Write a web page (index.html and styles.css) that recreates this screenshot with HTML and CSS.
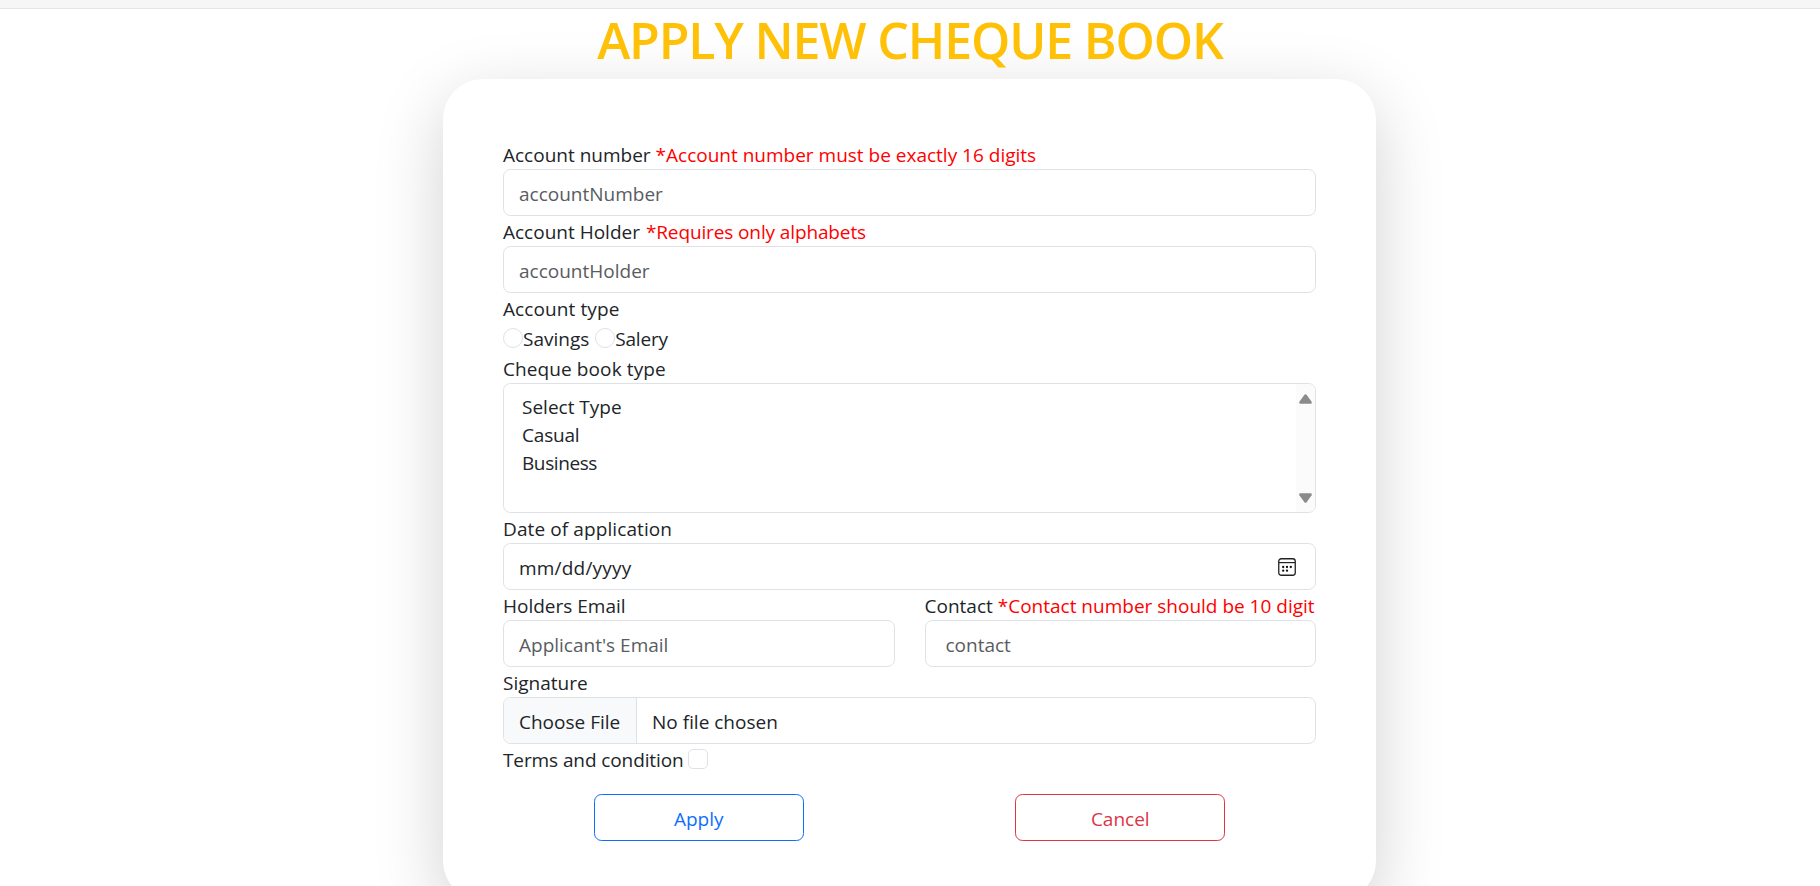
FILE: index.html
```html
<!DOCTYPE html>
<html lang="en">
<head>
<meta charset="utf-8">
<title>Apply New Cheque Book</title>
<link rel="stylesheet" href="styles.css">
</head>
<body>
<div class="topbar"></div>
<h1 class="title">APPLY NEW CHEQUE BOOK</h1>
<form class="card">
  <label class="label">Account number <span class="error">*Account number must be exactly 16 digits</span></label>
  <input class="control" type="text" placeholder="accountNumber">
  <label class="label">Account Holder <span class="error holder-error">*Requires only alphabets</span></label>
  <input class="control" type="text" placeholder="accountHolder">
  <div class="label loose">Account type</div>
  <div class="choices">
    <label class="choice"><span class="radio"></span><span class="choice-text">Savings</span></label>
    <label class="choice"><span class="radio"></span><span class="choice-text tight">Salery</span></label>
  </div>
  <div class="label loose">Cheque book type</div>
  <div class="listbox">
    <div class="options">
      <div>Select Type</div>
      <div class="tight">Casual</div>
      <div class="tighter">Business</div>
    </div>
    <div class="scrollbar">
      <svg width="13" height="10" viewBox="0 0 13 10"><path d="M5.4.8Q6.5-.5 7.600.8L12.600 7.700Q13.200 9.800 11.600 9.800H1.400Q-.2 9.800.4 7.700Z" fill="#8b8b8b"/></svg>
      <svg width="13" height="10" viewBox="0 0 13 10"><path d="M5.400 9.200Q6.500 10.500 7.600 9.200L12.600 2.300Q13.200.2 11.600.2H1.400Q-.2.2.4 2.300Z" fill="#8b8b8b"/></svg>
    </div>
  </div>
  <div class="label loose">Date of application</div>
  <div class="control date">
    <span class="date-text">mm/dd/yyyy</span>
    <svg width="18" height="18" viewBox="0 0 18 18"><rect x=".75" y=".75" width="16.500" height="16.500" rx="2.500" fill="none" stroke="#222" stroke-width="1.300"/><path d="M1 4.600H17" stroke="#222" stroke-width="1.200"/><g fill="#111"><circle cx="5.200" cy="9" r="1.150"/><circle cx="9" cy="9" r="1.150"/><circle cx="12.800" cy="9" r="1.150"/><circle cx="5.200" cy="12.700" r="1.150"/><circle cx="9" cy="12.700" r="1.150"/></g></svg>
  </div>
  <div class="row">
    <div class="col">
      <label class="label">Holders Email</label>
      <input class="control" type="text" placeholder="Applicant's Email">
    </div>
    <div class="col">
      <label class="label">Contact <span class="error">*Contact number should be 10 digit</span></label>
      <input class="control contact" type="text" placeholder="contact">
    </div>
  </div>
  <div class="label">Signature</div>
  <div class="control file"><span class="file-button">Choose File</span><span class="file-name">No file chosen</span></div>
  <label class="terms"><span class="terms-text">Terms and condition</span><span class="checkbox"></span></label>
  <div class="row actions">
    <div class="col"><button class="btn apply" type="button">Apply</button></div>
    <div class="col"><button class="btn cancel" type="button">Cancel</button></div>
  </div>
</form>
</body>
</html>
```
FILE: styles.css
```css
* { box-sizing: border-box; }
body {
  margin: 0;
  height: 886px;
  overflow: hidden;
  background: #fff;
  color: #212529;
  font: 370 19px/30px "Open Sans", "Noto Sans", sans-serif;
}
.topbar { height: 9px; background: #f6f6f6; border-bottom: 1px solid #e5e5e5; }
.title {
  position: relative;
  z-index: 1;
  height: 60px;
  margin: 0 0 10px;
  padding-top: 1px;
  color: #ffc107;
  font-size: 50px;
  font-weight: 600;
  line-height: 60px;
  letter-spacing: -1.150px;
  text-align: center;
}
.card {
  width: 933px;
  height: 822px;
  margin: 0 auto;
  position: relative;
  left: -0.5px;
  padding: 60px;
  border-radius: 40px;
  background: #fff;
  box-shadow: 0 20px 68px rgba(0, 0, 0, .18);
}
.label { display: block; height: 30px; padding-top: 1px; white-space: nowrap; }
.loose { letter-spacing: .1px; }
.tight { letter-spacing: -.2px; }
.tighter { letter-spacing: -.4px; }
.error { color: #f00; }
.holder-error { margin-left: 1px; letter-spacing: -.12px; }
.control {
  display: flex;
  align-items: center;
  width: 100%;
  height: 47px;
  padding: 2px 15px 0;
  border: 1px solid #dee2e6;
  border-radius: 7.500px;
  background: #fff;
  color: #212529;
  font: inherit;
}
.control::placeholder { color: #595c5f; opacity: 1; }
.contact { padding-left: 20px; }
.choices { display: flex; gap: 6px; height: 30px; }
.choice { display: flex; }
.choice-text { padding-top: 1px; }
.radio, .checkbox { width: 20px; height: 20px; margin-top: 5px; border: 1px solid #dee2e6; }
.radio { border-radius: 50%; }
.checkbox { border-radius: 5px; }
.listbox {
  display: flex;
  justify-content: space-between;
  height: 130px;
  border: 1px solid #dee2e6;
  border-radius: 7.500px;
  overflow: hidden;
}
.options { padding: 9px 18px; line-height: 28px; }
.scrollbar {
  display: flex;
  flex-direction: column;
  justify-content: space-between;
  align-items: center;
  width: 19px;
  padding: 10px 0 9px;
  background: #fbfbfb;
}
.date { justify-content: space-between; padding: 0 19px 0 15px; }
.date-text { padding-top: 2px; letter-spacing: .2px; }
.row { display: grid; grid-template-columns: 1fr 1fr; gap: 30px; }
.col { min-width: 0; }
.file { align-items: stretch; padding: 0; overflow: hidden; }
.file-button {
  width: 133px;
  padding: 9px 0 6px 15px;
  border-right: 1px solid #dee2e6;
  background: #f8f9fa;
}
.file-name { padding: 9px 0 6px 15px; }
.terms { display: flex; gap: 6px; height: 30px; }
.terms-text { width: 179px; padding-top: 1px; letter-spacing: -.1px; white-space: nowrap; }
.actions { margin-top: 20px; text-align: center; }
.btn {
  width: 210px;
  height: 47px;
  padding: 2px 0 0;
  border: 1px solid;
  border-radius: 7.500px;
  background: #fff;
  font: inherit;
}
.apply { color: #0d6efd; }
.cancel { color: #dc3545; }
```
